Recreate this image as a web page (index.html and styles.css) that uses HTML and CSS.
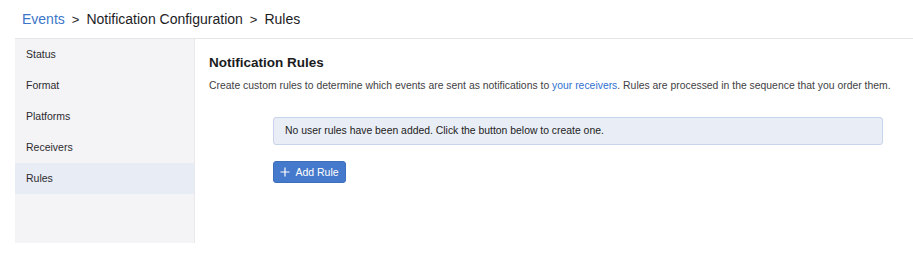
FILE: index.html
```html
<!DOCTYPE html>
<html>
<head>
  <title>Notification Rules</title>
  <link rel="stylesheet" href="styles.css">
</head>
<body>
  <div class="breadcrumb">
    <a href="#">Events</a>
    <span class="sep">&gt;</span>
    <span>Notification Configuration</span>
    <span class="sep">&gt;</span>
    <span>Rules</span>
  </div>
  <div class="layout">
    <ul class="sidebar">
      <li>Status</li>
      <li>Format</li>
      <li>Platforms</li>
      <li>Receivers</li>
      <li class="active">Rules</li>
    </ul>
    <div class="content">
      <h2>Notification Rules</h2>
      <p class="intro">Create custom rules to determine which events are sent as notifications to <a href="#">your receivers</a>. Rules are processed in the sequence that you order them.</p>
      <div class="rules">
        <div class="empty">No user rules have been added. Click the button below to create one.</div>
        <button type="button" class="add-btn">
          <svg width="10" height="10" viewBox="0 0 10 10"><path d="M5 0.5V9.5M0.5 5H9.5" stroke="#fff" stroke-width="1.2" fill="none"/></svg>
          Add Rule
        </button>
      </div>
    </div>
  </div>
</body>
</html>
```

FILE: styles.css
```css
body {
  margin: 0;
  font-family: "Liberation Sans", Arial, sans-serif;
  color: #1f1f1f;
  background: #fff;
}

a {
  text-decoration: none;
}

.breadcrumb {
  height: 38px;
  display: flex;
  align-items: center;
  gap: 7px;
  padding-left: 22px;
  font-size: 14px;
  color: #1d1d1f;
}

.breadcrumb a {
  color: #3b76c8;
}

.breadcrumb .sep {
  font-size: 13px;
}

.layout {
  display: flex;
  margin-left: 15px;
  border-top: 1px solid #e6e6e9;
}

.sidebar {
  list-style: none;
  margin: 0;
  padding: 0;
  flex: 0 0 179px;
  height: 204px;
  background: #f4f4f7;
  border-right: 1px solid #e9e9ed;
}

.sidebar li {
  height: 31px;
  line-height: 30px;
  padding-left: 11px;
  font-size: 10.5px;
  color: #2b2b2e;
}

.sidebar li.active {
  background: #e8ecf4;
}

.content {
  flex: 1;
  min-width: 0;
  padding: 15px 0 0 14px;
}

.content h2 {
  margin: 0;
  font-size: 13.5px;
  font-weight: bold;
  line-height: 18px;
  color: #1b1b1d;
}

.intro {
  margin: 6px 0 0;
  font-size: 10.4px;
  line-height: 16px;
  color: #414144;
  white-space: nowrap;
}

.intro a {
  color: #2f6fd1;
}

.rules {
  margin: 23px 0 0 64px;
  width: 610px;
}

.empty {
  height: 26px;
  line-height: 26px;
  padding-left: 11px;
  font-size: 10.4px;
  color: #222;
  background: #e9edf6;
  border: 1px solid #c7d4ea;
  border-radius: 3px;
}

.add-btn {
  margin-top: 16px;
  width: 73px;
  height: 22px;
  display: flex;
  align-items: center;
  justify-content: center;
  gap: 5px;
  font-family: "Liberation Sans", Arial, sans-serif;
  font-size: 10.5px;
  color: #fff;
  background: #4579cb;
  border: 1px solid #3e6fbd;
  border-radius: 3px;
  padding: 0;
  cursor: pointer;
}
```
